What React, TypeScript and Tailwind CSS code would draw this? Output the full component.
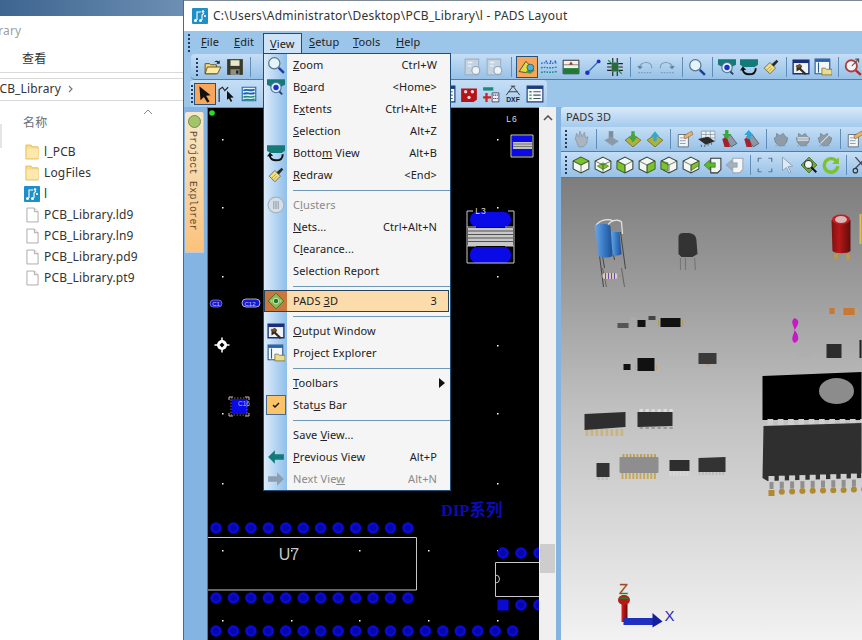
import type { ReactNode } from "react";

const S = ({ children, size = 18 }: { children: ReactNode; size?: number }) => (
  <svg viewBox="0 0 16 16" width={size} height={size} className="block shrink-0">
    {children}
  </svg>
);

// ---- toolbar icons ----
const Open = () => (
  <S>
    <path d="M1 5h4l1 1h5v8H1z" fill="#f6d77a" stroke="#5a4a1a" strokeWidth=".8" />
    <path d="M3 8h12l-3 6H1z" fill="#fbe9a6" stroke="#5a4a1a" strokeWidth=".8" />
    <path d="M9 4c1-2 3-2 4-1l1-1v3h-3l1-1c-1-.6-2-.5-3 0z" fill="#222" />
  </S>
);
const Save = () => (
  <S>
    <path d="M1 1h14v14H1z" fill="#3a3a2a" />
    <path d="M4 2h8v5H4z" fill="#e9e6c9" />
    <path d="M4 10h8v5H4z" fill="#8f8f86" />
    <path d="M9 11h2v3H9z" fill="#222" />
  </S>
);
const Pointer = () => (
  <S>
    <path d="M3 1l10 8-4 .6 3 5-2 1-3-5-3 3z" fill="#111" />
  </S>
);
const RouteArrow = () => (
  <S>
    <path d="M1 15V4l3-2 2 3 3-3" fill="none" stroke="#222" strokeWidth="1" />
    <path d="M8 5l6 6-3 .3 1.6 3-1.2.7-1.7-3L8 13z" fill="#111" />
  </S>
);
const Waves = () => (
  <S>
    <path d="M2 2h12v12H2z" fill="#e8f3f4" stroke="#1c6cb0" />
    <path d="M3 5c3-2 6 1 10-1M3 8c3-2 6 1 10-1" stroke="#1560b5" strokeWidth="1.6" fill="none" />
    <path d="M3 11c3-2 6 1 10-1M3 13.5c3-2 6 1 10-1" stroke="#1e8a7a" strokeWidth="1.4" fill="none" />
  </S>
);
const Mag = () => (
  <S>
    <circle cx="6.5" cy="6.5" r="5" fill="#e6f3fb" stroke="#58788f" strokeWidth="1.1" />
    <path d="M10.5 10.5L15 15" stroke="#1a3fa0" strokeWidth="2.2" />
  </S>
);
const Board = () => (
  <S>
    <path d="M0 1h16v5l-4 2H4L0 6z" fill="#147a78" />
    <circle cx="8" cy="8.5" r="4.6" fill="#dfeffa" stroke="#4f7895" />
    <circle cx="8" cy="8.5" r="2.4" fill="#1a2fd0" />
    <path d="M11 12l2.5 2.5" stroke="#26406f" strokeWidth="1.6" />
  </S>
);
const BottomView = () => (
  <S>
    <path d="M0 1h16v5l-3 2H3L0 6z" fill="#147a78" />
    <path d="M14 9c0 4-3 5.5-6 5.5S3 13 2.5 10.5" fill="none" stroke="#111" strokeWidth="1.7" />
    <path d="M0 11l2.5-3.5L5.5 10.5z" fill="#111" />
  </S>
);
const Brush = () => (
  <S>
    <path d="M2 9l5-5 5 5-5 5z" fill="#f4e07c" stroke="#555" strokeWidth=".7" />
    <path d="M4 11l4-4M6 12l3-3" stroke="#a8923a" strokeWidth=".7" />
    <path d="M8.5 5.5L13 1.5l1.5 1.5-4 4.5z" fill="#2b2b2b" />
  </S>
);
const Clusters = () => (
  <S>
    <circle cx="8" cy="8" r="7" fill="#d5dfe8" stroke="#a3b2c0" />
    <path d="M5.5 4.5h5v7h-5z" fill="#9aa7b3" />
    <path d="M7 4.5v7M9 4.5v7" stroke="#e5ebf0" strokeWidth=".7" />
  </S>
);
const Pads3D = () => (
  <S>
    <path d="M8 1l7 7-7 7-7-7z" fill="#8dba52" stroke="#3f6f2c" strokeWidth=".8" />
    <circle cx="8" cy="8" r="2.5" fill="#1a7a2f" stroke="#e6f2c8" strokeWidth=".8" />
    <path d="M3.5 8h1M11.5 8h1" stroke="#e6f2c8" />
  </S>
);
const Output = () => (
  <S>
    <path d="M1 2h14v12H1z" fill="#eef4fb" stroke="#1a2f78" strokeWidth="1.2" />
    <path d="M1 2h14v2.5H1z" fill="#1a2f78" />
    <path d="M4 6l5 1-1 2 5 5-1.5 1-5-4.5L4 12z" fill="#3a2a18" />
    <path d="M3 7l4-2 2 2-3 2z" fill="#6e5428" />
  </S>
);
const ProjectExp = () => (
  <S>
    <path d="M1 1h13v13H1z" fill="#f4f8fc" stroke="#2a5a94" />
    <path d="M1 1h13v2.5H1z" fill="#2a64b0" />
    <path d="M4 4v9" stroke="#2a5a94" />
    <path d="M7 9h3l1 1h5v5H7z" fill="#e8dc95" stroke="#7a6e30" strokeWidth=".7" />
  </S>
);
const ArrowLeft = () => (
  <S>
    <path d="M1 8l6-6v3.5h8v5H7V14z" fill="#157a7a" />
  </S>
);
const ArrowRight = () => (
  <S>
    <path d="M15 8L9 2v3.5H1v5h8V14z" fill="#8c9fb0" />
  </S>
);
const Dots = () => (
  <S>
    <path d="M1 5c3-2 5 1 14-1M1 9c3-2 5 1 14-1" stroke="#2377c4" strokeWidth="1.2" strokeDasharray="1.5 1" fill="none" />
    <path d="M1 13c3-2 5 1 14-1" stroke="#1a8f84" strokeWidth="1.4" strokeDasharray="1.5 1" fill="none" />
    <path d="M5 3h1M9 3h1M13 3h1" stroke="#1a2fb0" strokeWidth="1.5" />
  </S>
);
const Hatch = () => (
  <S>
    <path d="M1 2h14v12H1z" fill="#eef3e4" stroke="#223" strokeWidth=".8" />
    <path d="M1 9h14v5H1z" fill="#1f7a38" />
    <path d="M8 3l-2 3h4z" fill="#c43030" />
    <path d="M1 6h14" stroke="#555" strokeWidth=".6" />
  </S>
);
const Line = () => (
  <S>
    <path d="M3 13L13 3" stroke="#1d68c0" strokeWidth="1.2" />
    <circle cx="3" cy="13" r="2" fill="#1a2fc8" />
    <circle cx="13" cy="3" r="1.7" fill="#1a2fc8" />
  </S>
);
const ChipBurst = () => (
  <S>
    <path d="M5 4h6v8H5z" fill="#2b6b3a" />
    <path d="M1 5h4M1 8h4M1 11h4M11 5h4M11 8h4M11 11h4M6 0v4M10 0v4M6 12v4M10 12v4" stroke="#222" strokeWidth="1" />
    <path d="M2 2l3 3M14 14l-3-3" stroke="#1d8a4a" />
  </S>
);
const Undo = ({ flip }: { flip?: boolean }) => (
  <S>
    <g transform={flip ? "translate(16 0) scale(-1 1)" : undefined}>
      <path d="M3 9c0-3 3-5 6-5s5 2 5 5" fill="none" stroke="#7f9cb8" strokeWidth="1" />
      <path d="M1 7l2.5 3L6 7.5z" fill="#5e7f9e" />
      <path d="M2 13h12" stroke="#7f9cb8" strokeDasharray="1.5 1" />
    </g>
  </S>
);
const MagRed = () => (
  <S>
    <circle cx="6.5" cy="7" r="5" fill="#f0f4f8" stroke="#b53a3a" strokeWidth="1.6" />
    <path d="M10.5 11L15 15" stroke="#b52a2a" strokeWidth="2.2" />
    <path d="M7 7l6-6M10 1h3v3" stroke="#555" fill="none" />
  </S>
);
const DisabledCam = () => (
  <S>
    <path d="M1 1h12v14H1z" fill="#c3d3e2" stroke="#9db1c4" />
    <circle cx="10.5" cy="11" r="3.5" fill="#eef3f8" stroke="#8ea4b8" />
    <path d="M3.5 4h4M3.5 7h3" stroke="#eef3f8" strokeWidth="1.3" />
  </S>
);
const LayerActive = () => (
  <S>
    <path d="M1 12l6-9 5 5-5 5z" fill="#dede3c" stroke="#334" strokeWidth=".7" />
    <path d="M7 13l5-5 3 3-4 3z" fill="#4e9a3a" />
    <circle cx="11" cy="8.5" r="3" fill="#4fb3d8" stroke="#245" strokeWidth=".6" />
  </S>
);
const RedChip = () => (
  <S>
    <path d="M1 3h14v10l-3 2H1z" fill="#b5121a" />
    <circle cx="5" cy="6" r="1.5" fill="#f2d7d7" />
    <circle cx="11" cy="6" r="1.5" fill="#f2d7d7" />
    <circle cx="8" cy="11" r="1.5" fill="#f2d7d7" />
  </S>
);
const RedPlus = () => (
  <S>
    <path d="M1 2h9v3H1z" fill="#1d8a7a" />
    <path d="M4 7v8M1 11h7" stroke="#cc2222" strokeWidth="2" />
    <path d="M9 7h6v8H9z" fill="#eef" stroke="#334" strokeWidth=".7" />
    <path d="M10 9h4M10 12h4" stroke="#334" strokeDasharray="1 .7" />
  </S>
);
const Dxf = () => (
  <S>
    <path d="M8 1L2 9M8 1l6 8M4 6h8M6 1h4" stroke="#333" strokeWidth=".8" fill="none" />
    <text x="8" y="15.5" textAnchor="middle" fontSize="6" fontFamily="Liberation Sans, sans-serif" fontWeight="700" fill="#222">DXF</text>
  </S>
);
const ListIcon = () => (
  <S>
    <path d="M1 1h14v14H1z" fill="#f7fafd" stroke="#1a3a78" />
    <path d="M1 1h14v2.5H1z" fill="#1a3a78" />
    <path d="M3 6h2M3 9h2M3 12h2" stroke="#2a8a4a" strokeWidth="1.2" />
    <path d="M6.5 6H13M6.5 9H13M6.5 12H13" stroke="#456" strokeWidth="1.1" />
  </S>
);
const Hand = ({ c = "#a9b6c2" }: { c?: string }) => (
  <S>
    <path d="M3 8l1-5 2 3 1-5 2 5 2-4 1 5 2-1-1 6-3 3H6z" fill={c} stroke="#7f8e9c" strokeWidth=".6" />
  </S>
);
const Press = () => (
  <S>
    <path d="M6 1h4v6H6z" fill="#7d8d9b" />
    <path d="M2 9l6-3 7 4-6 4z" fill="#8b9aa7" />
  </S>
);
const ArrowBoard = ({ up }: { up?: boolean }) => (
  <S>
    <path d="M1 9l7-5 7 5-7 6z" fill="#b0b23c" stroke="#666a22" strokeWidth=".7" />
    <path d={up ? "M8 1L4 6h2.5v4h3V6H12z" : "M8 11l4-5H9.5V1h-3v5H4z"} fill={up ? "#35a8c8" : "#3fa83c"} />
  </S>
);
const Sheet = () => (
  <S>
    <path d="M2 4h9v11H2z" fill="#f2f5f8" stroke="#5d6b78" strokeWidth=".8" />
    <path d="M3.5 7h5M3.5 9.5h5M3.5 12h5" stroke="#8899a8" strokeWidth=".8" />
    <path d="M7 5l7-4 1 3-7 4z" fill="#e7b470" stroke="#7f5a22" strokeWidth=".5" />
  </S>
);
const GridChip = () => (
  <S>
    <path d="M3 1h12v9H3z" fill="#eef2f6" stroke="#7b8a97" strokeWidth=".6" />
    <path d="M7 1v9M11 1v9M3 4h12M3 7h12" stroke="#7b8a97" strokeWidth=".6" />
    <path d="M0 8l9-2 6 4-8 3z" fill="#2b2b2b" />
    <path d="M3 13v2M6 13v2M9 12v2M12 11v2" stroke="#6b6b6b" />
  </S>
);
const Books = ({ up }: { up?: boolean }) => (
  <S>
    <path d="M4 6l5-2 6 8-5 3z" fill="#8c99a4" stroke="#3f4a54" strokeWidth=".6" />
    <path d="M2 8l4-2 3 9H4z" fill="#a8202a" />
    <path d={up ? "M6 0L2 4.5h2.5V8h3V4.5H10z" : "M6 8l4-4.5H7.5V0h-3v3.5H2z"} fill={up ? "#2fa6d6" : "#3aa83a"} />
  </S>
);
const Comp = ({ v = 0 }: { v?: number }) => (
  <S>
    <path d="M4 3l3 2 3-2 2 3 2 1-1 4-3 3H6l-3-3-1-4 2-1z" fill="#8f9ca7" stroke="#6f7d88" strokeWidth=".6" />
    {v === 1 && <path d="M3 7h10M3 9h10" stroke="#dfe6ea" strokeWidth=".9" />}
    {v === 2 && <path d="M4 12L12 4" stroke="#dfe6ea" strokeWidth=".9" />}
    <path d="M3 14h10" stroke="#8d9ba5" strokeDasharray="1.5 1" />
  </S>
);
const Cube = ({ face = 0 }: { face?: number }) => {
  const faces = [
    "M8 1l7 3.5L8 8 1 4.5z",
    "M3 9l5-3 5 3-5 3z",
    "M1 4.5L8 8v7l-7-3.5z",
    "M8 8l7-3.5v7L8 15z",
    "M1 4.5l6 1.5v7L1 11.5z",
    "M8 8l7-3.5v4L8 13z",
  ];
  return (
    <S>
      <path d="M8 1l7 3.5v7L8 15l-7-3.5v-7z" fill="#f4f7f2" stroke="#2f3f2f" strokeWidth=".9" />
      <path d={faces[face]} fill="#7cc22c" stroke="#2f5f1f" strokeWidth=".5" />
      <path d="M8 8v7M1 4.5L8 8l7-3.5" fill="none" stroke="#2f3f2f" strokeWidth=".6" />
    </S>
  );
};
const PageArrow = ({ grey }: { grey?: boolean }) => (
  <S>
    <path d="M6 2h9v10l-3 3H6z" fill="#f3f6f8" stroke={grey ? "#9aa9b6" : "#333"} strokeWidth=".9" />
    <path d="M0 8l5-4.5V6h5v4H5v2.5z" fill={grey ? "#a3b1bd" : "#5cb82c"} stroke={grey ? "#8797a5" : "#2c6a18"} strokeWidth=".5" />
  </S>
);
const FitIcon = () => (
  <S>
    <path d="M2 5V2h3M14 5V2h-3M2 11v3h3M14 11v3h-3" fill="none" stroke="#5f7a92" strokeWidth="1.1" />
  </S>
);
const GhostArrow = () => (
  <S>
    <path d="M4 1l9 8-4 .5 2.5 5-1.5.8-2.500-5L4 13z" fill="#dfe9f3" stroke="#8a9db0" strokeWidth=".8" />
  </S>
);
const GreenMag = () => (
  <S>
    <path d="M8 1l7 7-7 7-7-7z" fill="#6fae2f" stroke="#2c5a18" strokeWidth=".7" />
    <circle cx="7.5" cy="7.5" r="3.5" fill="#f4f7f4" stroke="#333" />
    <path d="M10 10l4.5 4.5" stroke="#111" strokeWidth="1.8" />
  </S>
);
const Refresh = () => (
  <S>
    <path d="M13 5A6 6 0 1 0 14 9" fill="none" stroke="#7cc22c" strokeWidth="3" />
    <path d="M15 1v6H9z" fill="#7cc22c" />
  </S>
);
const Scissors = () => (
  <S>
    <path d="M3 1l9 10M13 1L3 11" stroke="#445" strokeWidth="1.1" />
    <circle cx="3" cy="13" r="2" fill="none" stroke="#333" />
    <circle cx="13" cy="13" r="2" fill="none" stroke="#333" />
  </S>
);

// ---- toolbar bits ----
const Grip = ({ w = "w-[11px]" }: { w?: string }) => (
  <div className={`${w} flex flex-col items-center justify-center gap-[2px] shrink-0`}>
    {[0, 1, 2, 3, 4].map((i) => (
      <span key={i} className="h-[2px] w-[2px] bg-[#1d3d66]" />
    ))}
  </div>
);
const Btn = ({ children, active }: { children: ReactNode; active?: boolean }) => (
  <div
    className={`w-[22px] h-[22px] flex items-center justify-center shrink-0 ${
      active ? "bg-[#f7a65a] border border-[#27527c]" : ""
    }`}
  >
    {children}
  </div>
);
const Sep = ({ w = "w-[8px]" }: { w?: string }) => (
  <div className={`${w} flex justify-center shrink-0`}>
    <span className="w-px h-[20px] bg-[#5f8db8]" />
  </div>
);
const barClass = "flex items-center bg-gradient-to-b from-[#c5def5] to-[#97c1e7] border-b border-[#4f7ea8]";

function MenuRow({ label, keys, icon, off }: { label: string; keys?: string; icon?: ReactNode; off?: boolean }) {
  const at = label.indexOf("&");
  const pre = at < 0 ? label : label.slice(0, at);
  const u = at < 0 ? "" : label[at + 1];
  const post = at < 0 ? "" : label.slice(at + 2);
  return (
    <div className={`flex items-center h-[22px] ${off ? "text-[#8a8a8a]" : "text-[#222]"}`}>
      <div className="w-[23px] flex justify-center shrink-0">{icon}</div>
      <div className="pl-[6px] flex-1 whitespace-pre">
        {pre}
        <span className="underline">{u}</span>
        {post}
      </div>
      {keys && <div className="pr-[13px] whitespace-pre">{keys}</div>}
    </div>
  );
}
const MenuSep = () => (
  <div className="h-[8px] flex items-center pl-[29px]">
    <span className="h-px w-full bg-[#6f97b8]" />
  </div>
);

function ViewMenu() {
  return (
    <div className="absolute left-[79px] top-[53px] w-[188px] h-[438px] border border-[#1f4f78] bg-[#f5f5f5] text-[11px] font-['Noto_Sans',sans-serif] tracking-[0.1px] z-20">
      <div className="absolute left-0 top-0 bottom-0 w-[23px] bg-gradient-to-r from-[#dcebf9] to-[#8fbfea]" />
      <div className="relative">
        <MenuRow label="&Zoom" keys="Ctrl+W" icon={<Mag />} />
        <MenuRow label="B&oard" keys="<Home>" icon={<Board />} />
        <MenuRow label="E&xtents" keys="Ctrl+Alt+E" />
        <MenuRow label="&Selection" keys="Alt+Z" />
        <MenuRow label="Botto&m View" keys="Alt+B" icon={<BottomView />} />
        <MenuRow label="&Redraw" keys="<End>" icon={<Brush />} />
        <MenuSep />
        <MenuRow label="C&lusters" icon={<Clusters />} off />
        <MenuRow label="&Nets..." keys="Ctrl+Alt+N" />
        <MenuRow label="C&learance..." />
        <MenuRow label="Selection Report" />
        <MenuSep />
        <div className="flex items-center h-[22px] bg-[#fcdcaa] border border-[#27425c] text-[#222] mr-[1px]">
          <div className="w-[22px] h-full flex justify-center items-center bg-[#c9763f] shrink-0">
            <Pads3D />
          </div>
          <div className="pl-[6px] flex-1">
            PADS <span className="underline">3</span>D
          </div>
          <div className="pr-[11px]">3</div>
        </div>
        <MenuSep />
        <MenuRow label="&Output Window" icon={<Output />} />
        <MenuRow label="Pro&ject Explorer" icon={<ProjectExp />} />
        <MenuSep />
        <div className="relative">
          <MenuRow label="&Toolbars" />
          <span className="absolute right-[5px] top-[6px] border-y-[5px] border-l-[6px] border-y-transparent border-l-[#111]" />
        </div>
        <div className="relative">
          <MenuRow label="Stat&us Bar" />
          <div className="absolute left-[2px] top-[1px] w-[20px] h-[20px] bg-[#fcc46a] border border-[#3f6a92] flex items-center justify-center">
            <svg viewBox="0 0 10 10" width="10" height="10">
              <path d="M2 5l2 2 4-4" fill="none" stroke="#111" strokeWidth="1.4" />
            </svg>
          </div>
        </div>
        <MenuSep />
        <MenuRow label="Save &View..." />
        <MenuRow label="&Previous View" keys="Alt+P" icon={<ArrowLeft />} />
        <MenuRow label="Next Vie&w" keys="Alt+N" icon={<ArrowRight />} off />
      </div>
    </div>
  );
}

function PcbCanvas() {
  const gx = [222, 291, 359, 428, 497];
  const gy = [139, 207, 276, 345, 413, 483, 550, 620];
  const pad = (x: number, y: number, k: string) => (
    <g key={k}>
      <circle cx={x} cy={y} r="5.8" fill="#0a0ad4" />
      <circle cx={x} cy={y} r="3" fill="#0707a8" />
    </g>
  );
  const row = (y: number, n: number) => Array.from({ length: n }, (_, i) => pad(216 + i * 17.45, y, `${y}-${i}`));
  return (
    <svg viewBox="208 108 331 532" className="block w-full h-full" fontFamily="'Liberation Sans', sans-serif">
      <rect x="208" y="108" width="331" height="532" fill="#000" />
      {gx.flatMap((x) => gy.map((y) => <rect key={`${x}-${y}`} x={x} y={y} width="1.5" height="1.5" fill="#fff" />))}
      <circle cx="212" cy="113" r="2.8" fill="#22dd22" />
      {/* origin marker */}
      <path d="M214.500 345h15M222 337.500v15" stroke="#fff" strokeWidth="1.500" />
      <circle cx="222" cy="345" r="5" fill="#fff" />
      <path d="M222 342.500l2.500 2.500-2.500 2.500-2.500-2.500z" fill="#000" />
      {/* small caps */}
      <rect x="210" y="300" width="12" height="7" rx="3.5" fill="#1616d8" stroke="#c8c8ff" strokeWidth=".5" />
      <text x="216" y="306" fontSize="6" textAnchor="middle" fill="#c8d0ff">C1</text>
      <rect x="242" y="299" width="18" height="8" rx="4" fill="#1616d8" stroke="#d8d8d8" strokeWidth=".8" />
      <text x="250" y="306" fontSize="6" textAnchor="middle" fill="#c8d0ff">C12</text>
      {/* C16 */}
      <rect x="232" y="399" width="15" height="15" fill="#0a0ae6" />
      <path d="M229 400v-3h4M245 397h4v3M229 413v3h4M245 416h4v-3" fill="none" stroke="#d8b8b8" />
      <path d="M231 398h16v17h-16z" fill="none" stroke="#d8b8d8" strokeDasharray="1.5 1.5" strokeWidth=".6" />
      <text x="238" y="406" fontSize="6.5" fill="#c8b8ff">C16</text>
      {/* L6 */}
      <text x="512" y="122" fontSize="8.5" textAnchor="middle" fill="#ddd" letterSpacing="1">L6</text>
      <rect x="512" y="136" width="20" height="20" fill="#0a0ae6" />
      <rect x="513" y="142" width="19" height="7" fill="#c2c2c2" />
      <path d="M513 144h19M513 146.5h19" stroke="#444" strokeWidth=".6" />
      <path d="M511 135h22v22h-22z" fill="none" stroke="#cfcfcf" />
      {/* L3 */}
      <rect x="470" y="212" width="41" height="15" rx="7" fill="#0a0ae6" />
      <rect x="470" y="247" width="41" height="16" rx="7" fill="#0a0ae6" />
      <rect x="468" y="228" width="45" height="18" fill="#c8c8c8" />
      <path d="M468 231h45M468 234.5h45M468 238h45M468 241.5h45" stroke="#333" strokeWidth=".8" />
      <path d="M473 211h-6v52h47v-52h-6M467 227h9M505 227h9M467 246h9M505 246h9" fill="none" stroke="#c8c8c8" />
      <text x="481" y="214" fontSize="8.5" textAnchor="middle" fill="#ddd" letterSpacing="1">L3</text>
      <text x="441" y="516" fontSize="16.5" fontWeight="700" fill="#0b0bb8" fontFamily="'Liberation Serif', 'Noto Sans CJK SC', serif">DIP系列</text>
      {row(528, 12)}
      {row(598, 12)}
      {row(631, 18)}
      <path d="M208 537.5H416.5V590H208" fill="none" stroke="#c8c8c8" />
      <text x="289" y="560" fontSize="16" textAnchor="middle" fill="#c8c8c8">U7</text>
      {pad(503, 553, "a")}
      {pad(521, 553, "b")}
      {pad(539, 553, "c")}
      <rect x="497.5" y="599.5" width="11" height="11" fill="#0a0ad4" />
      {pad(521, 605, "d")}
      {pad(539, 605, "e")}
      <path d="M540 562.5H495.5V596.5H540" fill="none" stroke="#c8c8c8" />
      <path d="M495.5 575a4 4 0 0 1 0 8" fill="none" stroke="#c8c8c8" />
    </svg>
  );
}

function Viewer3D() {
  const pins = (x: number, y: number, n: number, d: number, c: string, h = 5) =>
    Array.from({ length: n }, (_, i) => <rect key={`${x}-${y}-${i}`} x={x + i * d} y={y} width={d * 0.55} height={h} fill={c} />);
  return (
    <svg viewBox="562 178 300 462" className="block w-full h-full" fontFamily="'Liberation Sans', sans-serif">
      <defs>
        <linearGradient id="capBlue" x1="0" x2="1" y1="0" y2="0">
          <stop offset="0" stopColor="#6fa8e0" />
          <stop offset=".5" stopColor="#3a7cc8" />
          <stop offset="1" stopColor="#1d4f92" />
        </linearGradient>
        <linearGradient id="capRed" x1="0" x2="1" y1="0" y2="0">
          <stop offset="0" stopColor="#7d1010" />
          <stop offset=".4" stopColor="#b81818" />
          <stop offset="1" stopColor="#5f0c0c" />
        </linearGradient>
        <linearGradient id="rod" x1="0" x2="1" y1="0" y2="0">
          <stop offset="0" stopColor="#e02020" />
          <stop offset="1" stopColor="#6a0808" />
        </linearGradient>
      </defs>
      {/* blue caps and leads */}
      <path d="M597 232l7 55M603 256l2 12M613 250l2 10M621 232l5 37" stroke="#444" strokeWidth="1" fill="none" />
      <path d="M596 226c4-6 12-8 18-5M608 226c2-5 10-8 14-4l1 12" stroke="#e8e8e8" strokeWidth="1.2" fill="none" />
      <path d="M611 232h9l2 22c-2 2-7 2-9 1z" fill="url(#capBlue)" />
      <path d="M595 226c3-3 13-3 16 0l2 30c-3 2-11 2-14 0z" fill="url(#capBlue)" />
      <path d="M603 268l4 19M622 268l3 19" stroke="#555" strokeWidth=".8" />
      <rect x="603" y="273" width="15" height="6" rx="2.5" fill="#d9c8bc" />
      <path d="M606 273v6M609 273v6M612 273v6M615 273v6" stroke="#6040a0" strokeWidth=".9" />
      <path d="M601 276h2M618 276h3" stroke="#888" />
      {/* transistor */}
      <path d="M679 238c0-6 4-5 9-5s9 2 9 8l1 13-5 3h-11l-3-3z" fill="#333" />
      <path d="M686 258v12M695 258l1 12M681 258l0 12" stroke="#777" strokeWidth="1.2" />
      {/* red cap */}
      <path d="M832 220h19v31c-3 3-15 3-18 0z" fill="url(#capRed)" />
      <ellipse cx="841.5" cy="219.5" rx="9" ry="5" fill="#c22020" />
      <ellipse cx="841.5" cy="219.5" rx="6" ry="3.5" fill="#d8b8b8" />
      <rect x="835" y="254" width="3" height="5" fill="#c49a3c" />
      <rect x="847" y="254" width="3" height="5" fill="#c49a3c" />
      <rect x="860" y="214" width="2" height="30" fill="#d8c060" />
      {/* small smd parts */}
      <rect x="618" y="323" width="11" height="5" fill="#555" />
      <rect x="630" y="317" width="6" height="3" fill="#aaa" />
      <rect x="638" y="320" width="8" height="7" fill="#111" />
      <rect x="649" y="316" width="7" height="4" fill="#444" />
      <rect x="661" y="318" width="20" height="9" fill="#111" />
      <path d="M659 320v6M683 320v6" stroke="#b59a5c" />
      <path d="M795 318c-5 4 0 8 0 12s-5 9 0 13c6-2 4-9 0-13 4-5 6-10 0-12z" fill="#c818c8" />
      <rect x="830" y="308" width="5" height="6" fill="#c87830" />
      <rect x="844" y="308" width="11" height="7" fill="#c87830" />
      <path d="M842 309v5M857 309v5" stroke="#c8a468" />
      <rect x="799" y="347" width="12" height="10" fill="#aeaeae" />
      <rect x="827" y="344" width="15" height="14" fill="#2c2c2c" />
      <rect x="860" y="340" width="2" height="18" fill="#222" />
      <rect x="624" y="364" width="7" height="6" fill="#111" />
      <path d="M638 358h17v13h-17z" fill="#111" />
      <path d="M636 365v5M657 365v5" stroke="#c8a468" />
      <rect x="699" y="353" width="18" height="11" fill="#3a3a3a" />
      <rect x="707" y="364" width="3" height="2" fill="#c8a468" />
      {/* big DIP */}
      <path d="M763 376L862 372V420H763z" fill="#000" />
      <ellipse cx="837" cy="391" rx="17.5" ry="13" fill="#8c8c8c" />
      {pins(768, 419, 10, 10.3, "#cfcfcf", 6)}
      <path d="M764 426L862 423V478L768 481L763 478z" fill="#2f2f2f" />
      {Array.from({ length: 10 }, (_, i) => (
        <g key={i}>
          <rect x={769 + i * 10.3} y={476 - i * 0.3} width="6" height="6" fill="#d0d0d0" />
          <rect x={770 + i * 10.3} y={482 - i * 0.3} width="4" height="7" fill="#8f8f8f" />
          {i === 0 ? (
            <rect x={769} y={490} width="6" height="6" fill="#b08a30" />
          ) : (
            <circle cx={772 + i * 10.3} cy={492 - i * 0.3} r="3" fill="#b08a30" />
          )}
        </g>
      ))}
      {/* soics */}
      {pins(586, 429, 8, 5, "#c8b47c", 7)}
      <path d="M585 414l41-2v15l-41 3z" fill="#2e2e2e" />
      {pins(640, 409, 6, 6, "#dcdcdc", 3)}
      <path d="M638 412h35v14l-35 1z" fill="#2e2e2e" />
      {pins(640, 427, 6, 6, "#999", 2)}
      <path d="M597 463h13v14h-13z" fill="#333" />
      {pins(598, 477, 3, 4, "#bbb", 3)}
      {pins(623, 454, 10, 3.5, "#b8a060", 4)}
      <rect x="620" y="457" width="39" height="16" rx="1" fill="#8e8e8e" />
      {pins(622, 473, 10, 3.6, "#c8a858", 6)}
      <rect x="670" y="460" width="20" height="11" fill="#2e2e2e" />
      {pins(670, 471, 6, 3.4, "#d8d8d8", 5)}
      <path d="M699 458l27-1v15h-27z" fill="#333" />
      {pins(699, 472, 8, 3.4, "#bbb", 3)}
      {/* axis */}
      <path d="M622 604h6v14l-1 4h-5z" fill="url(#rod)" />
      <ellipse cx="624.5" cy="600" rx="6" ry="5" fill="#b81818" />
      <path d="M619.5 599c1-3 9-3 10 0z" fill="#2a7a2a" />
      <path d="M624 618h31v7h-31z" fill="#1f2fc0" />
      <path d="M653 613l10 8.5-10 6z" fill="#161ea0" />
      <text x="624" y="594" fontSize="15" textAnchor="middle" fill="#cc2020" stroke="#3aa03a" strokeWidth=".3">Z</text>
      <text x="670" y="621" fontSize="15" textAnchor="middle" fill="#2a2ab8">X</text>
    </svg>
  );
}

const files = ["PCB_Library.ld9", "PCB_Library.ln9", "PCB_Library.pd9", "PCB_Library.pt9"];

const Folder = () => (
  <svg viewBox="0 0 16 18" width="14" height="16" className="block">
    <path d="M1 1h6l1 2h7v14H1z" fill="#f8dc85" stroke="#e2bc5c" />
    <path d="M2 5h13v11H2z" fill="#fde9ad" />
  </svg>
);
// two stems with dots, like the PADS logo
const AppIcon = ({ size = 16 }: { size?: number }) => (
  <svg viewBox="0 0 16 16" width={size} height={size} className="block shrink-0">
    <rect width="16" height="16" rx="1" fill="#1f8fc8" />
    <path d="M5 12V4h4M10 12V7l2-2" fill="none" stroke="#fff" strokeWidth="1.1" />
    <circle cx="3.5" cy="12.5" r="1.500" fill="#fff" />
    <circle cx="8.5" cy="12.5" r="1.500" fill="#fff" />
    <circle cx="11" cy="3.500" r="1.300" fill="#fff" />
    <circle cx="13" cy="8" r="1.100" fill="#fff" />
  </svg>
);
const FileIcon = () => (
  <svg viewBox="0 0 14 16" width="13" height="16" className="block">
    <path d="M1 .5h8l4 4v11H1z" fill="#fff" stroke="#a6a6a6" />
    <path d="M9 .5v4h4" fill="#eee" stroke="#a6a6a6" />
  </svg>
);

function FileRow({ icon, name }: { icon: ReactNode; name: string }) {
  return (
    <div className="flex items-center h-[21px]">
      <div className="w-[18px] flex justify-center shrink-0">{icon}</div>
      <span className="ml-[3px]">{name}</span>
    </div>
  );
}

function Explorer() {
  return (
    <div className="w-[183px] shrink-0 flex flex-col bg-white font-['Noto_Sans','Noto_Sans_CJK_SC',sans-serif] text-[12px] tracking-[0.15px] text-[#333] relative">
      <div className="h-[16px] bg-gradient-to-r from-[#3d6590] to-[#6d8fb3] shrink-0" />
      <div className="h-[28px] pt-[6px] -ml-[19px] text-[#a0a0a0] text-[12px] leading-[18px]">Library</div>
      <div className="h-[28px] pl-[22px] pt-[5px] text-[12px] leading-[20px]">查看</div>
      <div className="h-[7px] border-y border-[#d9d9d9]" />
      <div className="h-[22px] flex items-center -ml-[8px] border-b border-[#d9d9d9] pb-[1px]">
        PCB_Library
        <svg viewBox="0 0 8 8" width="8" height="8" className="ml-[6px]">
          <path d="M2 1l3 3-3 3" fill="none" stroke="#777" strokeWidth="1.2" />
        </svg>
      </div>
      <div className="flex h-[38px] relative">
        <span className="pl-[23px] pt-[13px] text-[#6d6d6d] leading-[18px]">名称</span>
        <svg viewBox="0 0 10 6" width="10" height="6" className="absolute left-[143px] top-[8px]">
          <path d="M1 5l4-4 4 4" fill="none" stroke="#888" />
        </svg>
      </div>
      <span className="absolute left-0 top-[124px] w-[2px] h-[24px] bg-[#e5e5e5]" />
      <div className="pl-[23px] pt-[2px] flex flex-col">
        <FileRow icon={<Folder />} name="l_PCB" />
        <FileRow icon={<Folder />} name="LogFiles" />
        <FileRow icon={<AppIcon />} name="l" />
        {files.map((f) => (
          <FileRow key={f} icon={<FileIcon />} name={f} />
        ))}
      </div>
    </div>
  );
}

export default function App() {
  return (
    <div className="relative flex w-[862px] h-[640px] overflow-hidden bg-white">
      <Explorer />
      <div className="relative flex-1 flex flex-col border-l border-[#5a6672] font-['Noto_Sans',sans-serif] min-w-0">
        {/* title */}
        <div className="h-[31px] flex items-center pl-[8px] gap-[5px] bg-white border-t border-[#7d8a96] text-[12px] tracking-[0.23px] text-[#333] shrink-0 whitespace-nowrap">
          <AppIcon />
          <span>C:\Users\Administrator\Desktop\PCB_Library\l - PADS Layout</span>
        </div>
        {/* menu bar */}
        <div className="h-[23px] flex items-center bg-[#9cc5ea] text-[11px] tracking-[0.1px] text-[#222] shrink-0 relative">
          <Grip w="w-[9px]" />
          <div className="flex h-full items-center pl-[8px] grow">
            <span className="w-[33px]"><span className="underline">F</span>ile</span>
            <span className="w-[29px]"><span className="underline">E</span>dit</span>
            <span className="w-[39px] h-[21px] mt-[2px] pl-[6px] leading-[20px] bg-[#cfe3f6] border border-b-0 border-[#1f4f78]"><span className="underline">V</span>iew</span>
            <span className="w-[44px] ml-[7px]"><span className="underline">S</span>etup</span>
            <span className="w-[43px]"><span className="underline">T</span>ools</span>
            <span><span className="underline">H</span>elp</span>
          </div>
        </div>
        {/* main toolbar */}
        <div className="h-[26px] pl-[7px] bg-[#9cc5ea] shrink-0">
          <div className={`${barClass} h-full rounded-l-[4px]`}>
            <Grip />
            <Btn><Open /></Btn>
            <Btn><Save /></Btn>
            <Sep />
            <div className="w-[208px] shrink-0" />
            <Btn><DisabledCam /></Btn>
            <Btn><DisabledCam /></Btn>
            <Sep w="w-[10px]" />
            <Btn active><LayerActive /></Btn>
            <Btn><Dots /></Btn>
            <Btn><Hatch /></Btn>
            <Btn><Line /></Btn>
            <Btn><ChipBurst /></Btn>
            <Sep />
            <Btn><Undo /></Btn>
            <Btn><Undo flip /></Btn>
            <Sep />
            <Btn><Mag /></Btn>
            <Sep />
            <Btn><Board /></Btn>
            <Btn><BottomView /></Btn>
            <Btn><Brush /></Btn>
            <Sep />
            <Btn><Output /></Btn>
            <Btn><ProjectExp /></Btn>
            <Sep />
            <Btn><MagRed /></Btn>
          </div>
        </div>
        {/* second toolbar */}
        <div className="h-[27px] pl-[6px] pr-[315px] bg-[#9cc5ea] shrink-0">
          <div className="flex items-center h-full rounded-[4px] bg-gradient-to-b from-[#c5def5] to-[#a8cdee]">
            <Grip w="w-[4px]" />
            <Btn active><Pointer /></Btn>
            <Btn><RouteArrow /></Btn>
            <Btn><Waves /></Btn>
            <div className="w-[176px] shrink-0" />
            <Btn><ListIcon /></Btn>
            <Btn><RedChip /></Btn>
            <Btn><RedPlus /></Btn>
            <Btn><Dxf /></Btn>
            <Btn><ListIcon /></Btn>
          </div>
        </div>
        {/* work area */}
        <div className="flex-1 flex min-h-0 bg-[#84b5e2]">
          <div className="w-[24px] shrink-0 border-r border-[#6e6e6e]">
            <div className="mt-[5px] ml-[1px] w-[19px] h-[141px] rounded-t-[2px] bg-gradient-to-b from-[#f6e8cc] to-[#fbc27a] border-r border-b border-[#b9cbdc] flex flex-col items-center">
              <span className="mt-[3px] w-[13px] h-[13px] rounded-full bg-[#a3c46a] border border-[#6f8f4a]" />
              <span className="mt-[3px] -ml-[4px] [writing-mode:vertical-rl] font-['Liberation_Mono',monospace] text-[10px] tracking-[0.25px] leading-[11px] text-[#5a4a30]">Project Explorer</span>
            </div>
          </div>
          <div className="w-[331px] shrink-0 border-t border-[#8a8a8a]">
            <PcbCanvas />
          </div>
          <div className="w-[17px] shrink-0 bg-[#f0f0f0] flex flex-col items-center relative">
            <svg viewBox="0 0 10 6" width="10" height="6" className="mt-[8px]">
              <path d="M1 5l4-4 4 4" fill="none" stroke="#555" strokeWidth="1.6" />
            </svg>
            <span className="absolute top-[437px] left-[1px] w-[15px] h-[29px] bg-[#cdcdcd]" />
          </div>
          <div className="w-[5px] shrink-0" />
          <div className="flex-1 flex flex-col min-w-0 overflow-hidden">
            <div className="h-[20px] pl-[5px] flex items-center text-[11px] tracking-[0.1px] text-[#333] bg-gradient-to-b from-[#d9e9f8] to-[#a5cbed] rounded-tl-[3px] shrink-0">PADS 3D</div>
            <div className={`${barClass} h-[25px] shrink-0`}>
              <Grip w="w-[9px]" />
              <Btn><Hand /></Btn>
              <Sep />
              <Btn><Press /></Btn>
              <Btn><ArrowBoard /></Btn>
              <Btn><ArrowBoard up /></Btn>
              <Sep />
              <Btn><Sheet /></Btn>
              <Btn><GridChip /></Btn>
              <Btn><Books /></Btn>
              <Btn><Books up /></Btn>
              <Sep />
              <Btn><Comp /></Btn>
              <Btn><Comp v={1} /></Btn>
              <Btn><Comp v={2} /></Btn>
              <Sep />
              <Btn><Sheet /></Btn>
            </div>
            <div className={`${barClass} h-[26px] shrink-0`}>
              <Grip w="w-[9px]" />
              {[0, 1, 2, 3, 4, 5].map((f) => (
                <Btn key={f}><Cube face={f} /></Btn>
              ))}
              <Btn><PageArrow /></Btn>
              <Btn><PageArrow grey /></Btn>
              <Sep />
              <Btn><FitIcon /></Btn>
              <Btn><GhostArrow /></Btn>
              <Btn><GreenMag /></Btn>
              <Btn><Refresh /></Btn>
              <Sep />
              <Btn><Scissors /></Btn>
            </div>
            <div className="flex-1 min-h-0 bg-gradient-to-b from-[#7d7d7d] via-[#c0c0c0] to-[#f2f2f2]">
              <Viewer3D />
            </div>
          </div>
        </div>
        {/* open View menu */}
        <ViewMenu />
      </div>
    </div>
  );
}
